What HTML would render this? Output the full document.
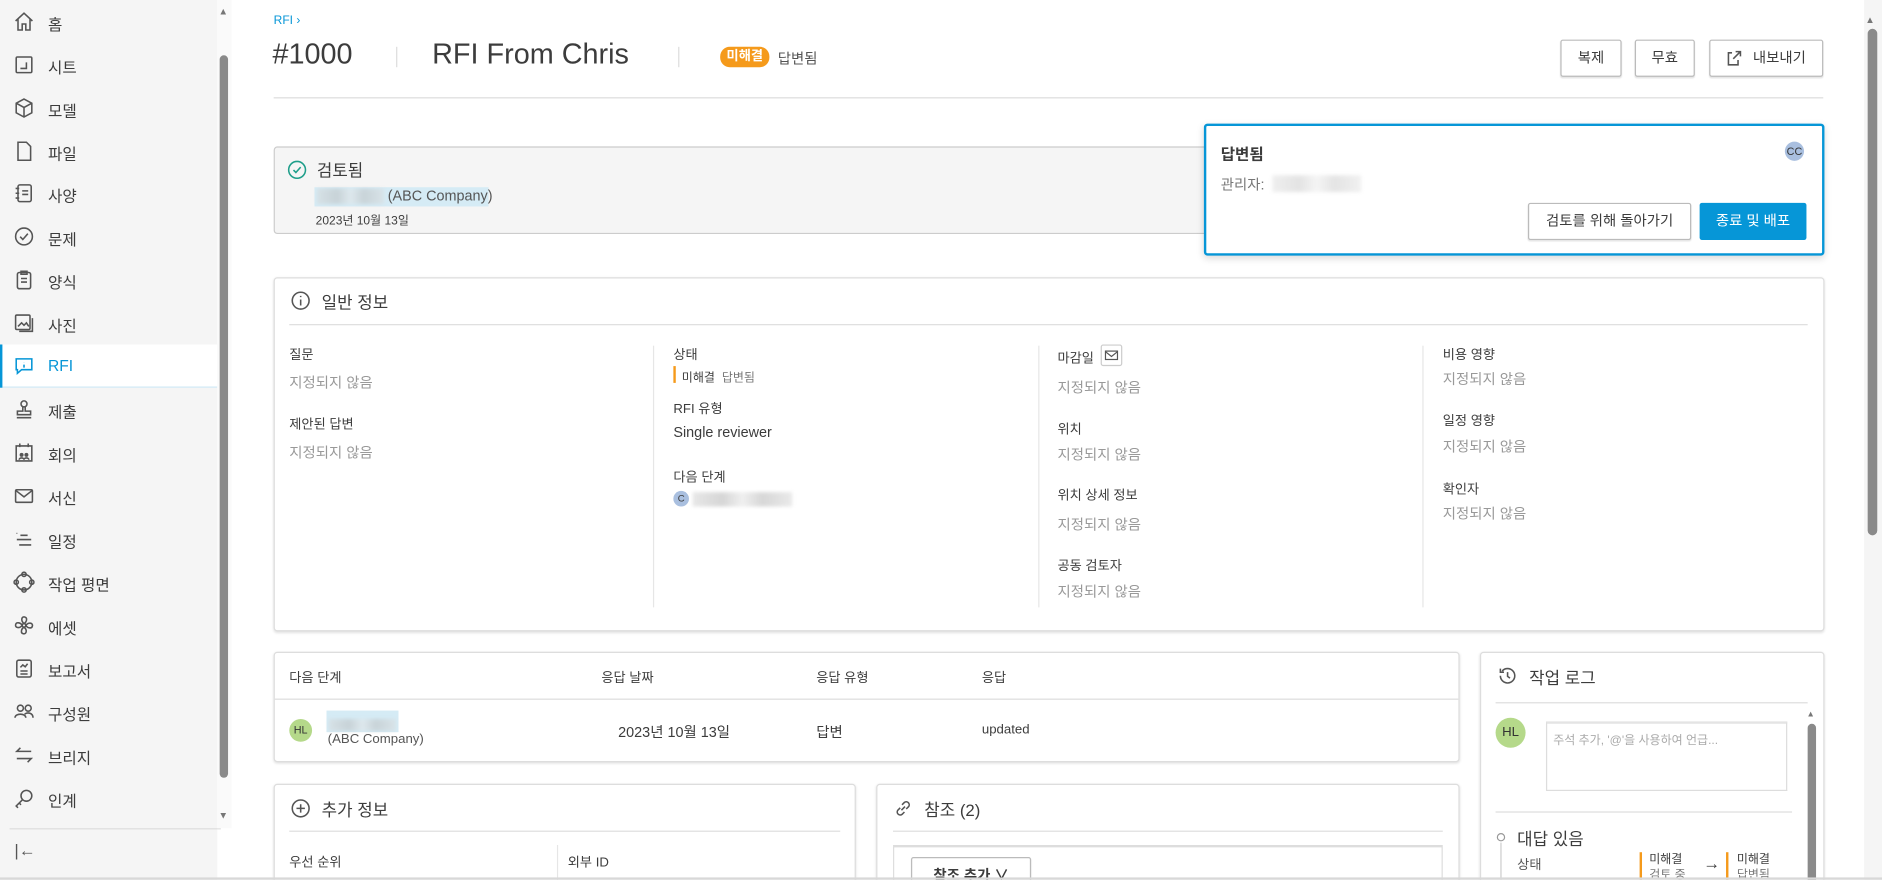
<!DOCTYPE html>
<html><head><meta charset="utf-8">
<style>
*{box-sizing:border-box;margin:0;padding:0}
html,body{width:1882px;height:880px;overflow:hidden;background:#fff}
body{font-family:"Liberation Sans","Noto Sans CJK KR",sans-serif;color:#3c3c3c}
#w{position:absolute;left:0;top:0;width:1568px;height:733px;transform:scale(1.2003);transform-origin:0 0;background:#fff;overflow:hidden}
.a{position:absolute;white-space:nowrap}
#side{position:absolute;left:0;top:0;width:181px;height:733px;background:#f5f5f5}
.nav{position:absolute;left:0;width:181px;height:36px;font-size:13px;color:#3c3c3c}
.nav svg{position:absolute;left:11px;top:9px;width:18px;height:18px;fill:none;stroke:#555;stroke-width:1.3}
.nav span{position:absolute;left:40px;top:10px}
.nav.on{background:#fff;color:#0696d7;border-bottom:1px solid #cfe8f5}
.nav.on:before{content:"";position:absolute;left:0;top:0;width:2px;height:36px;background:#0696d7}
.nav.on svg{stroke:#0696d7}
.card{position:absolute;background:#fff;border:1px solid #ddd;border-radius:3px;box-shadow:0 1px 2px rgba(0,0,0,.12)}
.lbl{font-size:11px;color:#3c3c3c}
.na{font-size:12px;color:#999}
.hr{position:absolute;height:1px;background:#ddd}
.vr{position:absolute;width:1px;background:#e6e6e6}
.btn{position:absolute;border:1px solid #bbb;border-radius:2px;background:#fff;font-size:12px;color:#3c3c3c;text-align:center;box-shadow:0 1px 1px rgba(0,0,0,.1)}
.blur{position:absolute;background:linear-gradient(90deg,#d8d8d8,#bbb 30%,#e6e6e6 50%,#bdbdbd 70%,#dcdcdc);filter:blur(1.5px)}
.ic{fill:none;stroke:#555;stroke-width:1.3}
</style></head><body><div id="w">

<div id="side">
<div class="nav" style="top:0"><svg viewBox="0 0 18 18"><path d="M2 8.5L9 2l7 6.5M4 7v9h3.5v-5h3v5H14V7"/></svg><span>홈</span></div>
<div class="nav" style="top:36px"><svg viewBox="0 0 18 18"><rect x="2.5" y="2.5" width="13" height="13" rx="1"/><path d="M6 12h5V7"/></svg><span>시트</span></div>
<div class="nav" style="top:72px"><svg viewBox="0 0 18 18"><path d="M9 1.5l6.5 3.5v8L9 16.5 2.5 13V5zM2.5 5L9 8.5l6.5-3.5M9 8.5v8"/></svg><span>모델</span></div>
<div class="nav" style="top:108px"><svg viewBox="0 0 18 18"><path d="M4 1.5h7l3.5 3.5v11.5H4z"/></svg><span>파일</span></div>
<div class="nav" style="top:143px"><svg viewBox="0 0 18 18"><rect x="4" y="2" width="11" height="14" rx="1.5"/><path d="M2 5h3M2 9h3M2 13h3M7.5 7h5M7.5 10h5"/></svg><span>사양</span></div>
<div class="nav" style="top:179px"><svg viewBox="0 0 18 18"><circle cx="9" cy="9" r="7"/><path d="M5.8 9.2l2.2 2.3 4.2-4.8"/></svg><span>문제</span></div>
<div class="nav" style="top:215px"><svg viewBox="0 0 18 18"><rect x="3.5" y="3" width="11" height="13.5" rx="1.5"/><path d="M6.5 2h5v2.5h-5zM6.5 8h5M6.5 11h5"/></svg><span>양식</span></div>
<div class="nav" style="top:251px"><svg viewBox="0 0 18 18"><rect x="2" y="2.5" width="12" height="12" rx="1"/><path d="M16 5v11H5M4 12l3-3 2 2 2-2 2 3"/></svg><span>사진</span></div>
<div class="nav on" style="top:287px"><svg viewBox="0 0 18 18"><path d="M2.5 3h13v9H7l-3.5 3v-3h-1z"/><path d="M9 6v.1M9 7.8v2.5"/></svg><span>RFI</span></div>
<div class="nav" style="top:323px"><svg viewBox="0 0 18 18"><circle cx="9" cy="4.5" r="2.5"/><path d="M8 7v3.5H3.5v3h11v-3H10V7M3 16h12"/></svg><span>제출</span></div>
<div class="nav" style="top:359px"><svg viewBox="0 0 18 18"><path d="M2.5 3.5h13V16h-13zM5.5 1.5v3M12.5 1.5v3"/><circle cx="7" cy="11" r="1" fill="#555"/><circle cx="11" cy="11" r="1" fill="#555"/><path d="M5 15c0-2 4-2 4 0M9 15c0-2 4-2 4 0"/></svg><span>회의</span></div>
<div class="nav" style="top:395px"><svg viewBox="0 0 18 18"><rect x="2" y="4" width="14" height="10.5" rx="1"/><path d="M2 4.5l7 5.5 7-5.5"/></svg><span>서신</span></div>
<div class="nav" style="top:431px"><svg viewBox="0 0 18 18"><path d="M3 4v.5M6 6h6M3 9.5h12M5 14h10"/></svg><span>일정</span></div>
<div class="nav" style="top:467px"><svg viewBox="0 0 18 18"><circle cx="9" cy="9" r="6.5"/><circle cx="9" cy="2.5" r="1.8"/><circle cx="15.5" cy="9" r="1.8"/><circle cx="9" cy="15.5" r="1.8"/><circle cx="2.5" cy="9" r="1.8"/></svg><span>작업 평면</span></div>
<div class="nav" style="top:503px"><svg viewBox="0 0 18 18"><circle cx="9" cy="9" r="1.5"/><path d="M9 7.5C6 5 7 1.5 9.5 2s2 4-.5 5.5M10.5 9c2.5-3 6-2 5.5.5s-4 2-5.5-.5M9 10.5c3 2.5 2 6-.5 5.5s-2-4 .5-5.5M7.5 9c-2.5 3-6 2-5.5-.5s4-2 5.5.5"/></svg><span>에셋</span></div>
<div class="nav" style="top:539px"><svg viewBox="0 0 18 18"><rect x="3" y="2" width="12" height="14" rx="1.5"/><path d="M6 8l2-2 2 1.5 2-2.5M6 11h6M6 13.5h6"/></svg><span>보고서</span></div>
<div class="nav" style="top:575px"><svg viewBox="0 0 18 18"><circle cx="6" cy="6" r="2.5"/><circle cx="12.5" cy="6" r="2.5"/><path d="M1.5 14c0-4 9-4 9 0M9.5 11c2.5-2 7-1 7 3"/></svg><span>구성원</span></div>
<div class="nav" style="top:611px"><svg viewBox="0 0 18 18"><path d="M15 6H3l3-3M3 12h12l-3 3"/></svg><span>브리지</span></div>
<div class="nav" style="top:647px"><svg viewBox="0 0 18 18"><circle cx="11" cy="7" r="4.5"/><path d="M8 10l-5.5 5.5 1.5 1.5M5 13l1.5 1.5"/></svg><span>인계</span></div>
<div class="hr" style="left:8px;top:690px;width:176px;background:#ddd"></div>
<div class="a" style="left:12px;top:700px;font-size:14px;color:#555">|←</div>
</div>
<div class="a" style="left:181px;top:0;width:12px;height:690px;background:#fafafa"></div>
<div class="a" style="left:182px;top:5px;font-size:8px;color:#777">▲</div>
<div class="a" style="left:183px;top:46px;width:7px;height:602px;background:#8a8a8a;border-radius:4px"></div>
<div class="a" style="left:182px;top:675px;font-size:8px;color:#777">▼</div>

<div class="a" style="left:1553px;top:0;width:15px;height:733px;background:#f5f5f5"></div>
<div class="a" style="left:1554px;top:12px;font-size:8px;color:#777">▲</div>
<div class="a" style="left:1556px;top:24px;width:8px;height:422px;background:#8a8a8a;border-radius:4px"></div>

<div class="a" style="left:228px;top:12px;font-size:10px;color:#0696d7">RFI ›</div>
<div class="a" style="left:227px;top:32px;font-size:24px;color:#3c3c3c">#1000</div>
<div class="a" style="left:330px;top:39px;width:1px;height:17px;background:#ddd"></div>
<div class="a" style="left:360px;top:32px;font-size:24px;color:#3c3c3c">RFI From Chris</div>
<div class="a" style="left:565px;top:39px;width:1px;height:17px;background:#ddd"></div>
<div class="a" style="left:600px;top:39px;width:41px;height:17px;background:#f59a1b;border-radius:8px;color:#fff;font-size:11px;font-weight:bold;text-align:center;line-height:17px">미해결</div>
<div class="a" style="left:648px;top:40px;font-size:12px;color:#555">답변됨</div>
<div class="btn" style="left:1300px;top:33px;width:51px;height:31px;line-height:29px">복제</div>
<div class="btn" style="left:1362px;top:33px;width:50px;height:31px;line-height:29px">무효</div>
<div class="btn" style="left:1424px;top:33px;width:95px;height:31px;line-height:29px;padding-left:22px"><svg class="a" style="left:11px;top:7px" width="16" height="16" viewBox="0 0 16 16"><path class="ic" d="M7 3H4v10h8v-4M8 8l6-6M10 2h4v4"/></svg>내보내기</div>
<div class="hr" style="left:228px;top:81px;width:1291px"></div>

<div class="a" style="left:228px;top:122px;width:790px;height:73px;background:#f5f5f5;border:1px solid #ccc;border-radius:3px"></div>
<svg class="a" style="left:239px;top:133px" width="17" height="17" viewBox="0 0 17 17"><circle cx="8.5" cy="8.5" r="7" fill="none" stroke="#1e9e8a" stroke-width="1.3"/><path d="M5.5 8.7l2 2 4-4.5" fill="none" stroke="#1e9e8a" stroke-width="1.3"/></svg>
<div class="a" style="left:264px;top:132px;font-size:14px;color:#3c3c3c">검토됨</div>
<div class="a" style="left:262px;top:156px;width:145px;height:16px;background:#d5ebf5"></div>
<div class="blur" style="left:264px;top:157px;width:56px;height:13px;opacity:.5"></div>
<div class="a" style="left:323px;top:156px;font-size:12px;color:#555">(ABC Company)</div>
<div class="a" style="left:263px;top:175px;font-size:10px;color:#3c3c3c">2023년 10월 13일</div>

<div class="a" style="left:1003px;top:103px;width:517px;height:110px;background:#fff;border:2px solid #0696d7;border-radius:3px;box-shadow:0 2px 6px rgba(0,0,0,.15)"></div>
<div class="a" style="left:1017px;top:118px;font-size:13px;font-weight:bold;color:#3c3c3c">답변됨</div>
<div class="a" style="left:1487px;top:118px;width:16px;height:16px;border-radius:8px;background:#a9bfdf;font-size:9px;text-align:center;line-height:16px;color:#333">CC</div>
<div class="a" style="left:1017px;top:145px;font-size:12px;color:#777">관리자:</div>
<div class="blur" style="left:1060px;top:146px;width:74px;height:14px;opacity:.4"></div>
<div class="btn" style="left:1273px;top:169px;width:136px;height:31px;line-height:29px">검토를 위해 돌아가기</div>
<div class="a" style="left:1416px;top:169px;width:89px;height:31px;background:#0696d7;color:#fff;font-size:12px;text-align:center;line-height:31px;border-radius:2px">종료 및 배포</div>

<div class="card" style="left:228px;top:231px;width:1292px;height:295px"></div>
<svg class="a" style="left:242px;top:242px" width="17" height="17" viewBox="0 0 17 17"><circle cx="8.5" cy="8.5" r="7" class="ic"/><path class="ic" d="M8.5 7.5v5M8.5 4.5v1"/></svg>
<div class="a" style="left:268px;top:242px;font-size:14px;color:#3c3c3c">일반 정보</div>
<div class="hr" style="left:241px;top:270px;width:1265px"></div>
<div class="vr" style="left:544px;top:288px;height:218px"></div>
<div class="vr" style="left:865px;top:288px;height:218px"></div>
<div class="vr" style="left:1185px;top:288px;height:218px"></div>

<div class="a lbl" style="left:241px;top:287px">질문</div>
<div class="a na" style="left:241px;top:310px">지정되지 않음</div>
<div class="a lbl" style="left:241px;top:345px">제안된 답변</div>
<div class="a na" style="left:241px;top:368px">지정되지 않음</div>

<div class="a lbl" style="left:561px;top:287px">상태</div>
<div class="a" style="left:561px;top:305px;width:2px;height:14px;background:#f59a1b"></div>
<div class="a" style="left:568px;top:306px;font-size:10px;color:#3c3c3c">미해결 <span style="color:#777;margin-left:3px">답변됨</span></div>
<div class="a lbl" style="left:561px;top:332px">RFI 유형</div>
<div class="a" style="left:561px;top:353px;font-size:12px;color:#3c3c3c">Single reviewer</div>
<div class="a lbl" style="left:561px;top:389px">다음 단계</div>
<div class="a" style="left:561px;top:409px;width:13px;height:13px;border-radius:7px;background:#a9bfdf;font-size:8px;text-align:center;line-height:13px">C</div>
<div class="blur" style="left:577px;top:410px;width:83px;height:12px;opacity:.6"></div>

<div class="a lbl" style="left:881px;top:290px">마감일</div>
<div class="a" style="left:917px;top:287px;width:18px;height:18px;border:1px solid #ccc;border-radius:2px"><svg width="16" height="16" viewBox="0 0 16 16"><rect x="3" y="4.5" width="10" height="7" fill="none" stroke="#555"/><path d="M3 5l5 4 5-4" fill="none" stroke="#555"/></svg></div>
<div class="a na" style="left:881px;top:314px">지정되지 않음</div>
<div class="a lbl" style="left:881px;top:349px">위치</div>
<div class="a na" style="left:881px;top:370px">지정되지 않음</div>
<div class="a lbl" style="left:881px;top:404px">위치 상세 정보</div>
<div class="a na" style="left:881px;top:428px">지정되지 않음</div>
<div class="a lbl" style="left:881px;top:463px">공동 검토자</div>
<div class="a na" style="left:881px;top:484px">지정되지 않음</div>

<div class="a lbl" style="left:1202px;top:287px">비용 영향</div>
<div class="a na" style="left:1202px;top:307px">지정되지 않음</div>
<div class="a lbl" style="left:1202px;top:342px">일정 영향</div>
<div class="a na" style="left:1202px;top:363px">지정되지 않음</div>
<div class="a lbl" style="left:1202px;top:399px">확인자</div>
<div class="a na" style="left:1202px;top:419px">지정되지 않음</div>

<div class="card" style="left:228px;top:543px;width:988px;height:92px"></div>
<div class="a lbl" style="left:241px;top:556px">다음 단계</div>
<div class="a lbl" style="left:501px;top:556px">응답 날짜</div>
<div class="a lbl" style="left:680px;top:556px">응답 유형</div>
<div class="a lbl" style="left:818px;top:556px">응답</div>
<div class="hr" style="left:229px;top:582px;width:986px"></div>
<div class="a" style="left:241px;top:599px;width:19px;height:19px;border-radius:10px;background:#b5d98a;font-size:9px;text-align:center;line-height:19px;color:#333">HL</div>
<div class="a" style="left:272px;top:592px;width:60px;height:18px;background:#d5ebf5"></div>
<div class="blur" style="left:274px;top:599px;width:56px;height:10px;opacity:.5"></div>
<div class="a" style="left:273px;top:610px;font-size:11px;color:#555">(ABC Company)</div>
<div class="a" style="left:515px;top:601px;font-size:12px;color:#3c3c3c">2023년 10월 13일</div>
<div class="a" style="left:680px;top:601px;font-size:12px;color:#3c3c3c">답변</div>
<div class="a" style="left:818px;top:602px;font-size:11px;color:#3c3c3c">updated</div>

<div class="card" style="left:228px;top:653px;width:485px;height:100px"></div>
<svg class="a" style="left:242px;top:665px" width="17" height="17" viewBox="0 0 17 17"><circle cx="8.5" cy="8.5" r="7" class="ic"/><path class="ic" d="M8.5 5v7M5 8.5h7"/></svg>
<div class="a" style="left:268px;top:665px;font-size:14px">추가 정보</div>
<div class="hr" style="left:241px;top:692px;width:459px"></div>
<div class="a lbl" style="left:241px;top:710px">우선 순위</div>
<div class="vr" style="left:464px;top:704px;height:40px"></div>
<div class="a lbl" style="left:473px;top:710px">외부 ID</div>

<div class="card" style="left:730px;top:653px;width:486px;height:100px"></div>
<svg class="a" style="left:744px;top:665px" width="17" height="17" viewBox="0 0 17 17"><path class="ic" d="M7 10l3-3M6 8L4 10a2.5 2.5 0 003.5 3.5L9.5 11.5M11 9l2-2A2.5 2.5 0 009.5 3.5L7.5 5.5"/></svg>
<div class="a" style="left:770px;top:665px;font-size:14px">참조 (2)</div>
<div class="hr" style="left:744px;top:692px;width:458px"></div>
<div class="a" style="left:744px;top:704px;width:458px;height:40px;border:1px solid #ddd;border-top:2px solid #ddd"></div>
<div class="btn" style="left:759px;top:714px;width:100px;height:30px;line-height:28px;font-weight:bold">참조 추가 ∨</div>

<div class="card" style="left:1233px;top:543px;width:287px;height:200px"></div>
<svg class="a" style="left:1247px;top:554px" width="18" height="18" viewBox="0 0 18 18"><path class="ic" d="M3 9a6 6 0 106-6 6 6 0 00-4.5 2M3 3v3h3M9 6v3.5l2 1.5"/></svg>
<div class="a" style="left:1274px;top:555px;font-size:14px">작업 로그</div>
<div class="hr" style="left:1246px;top:585px;width:260px"></div>
<div class="a" style="left:1505px;top:592px;font-size:7px;color:#777">▲</div>
<div class="a" style="left:1506px;top:603px;width:7px;height:140px;background:#8a8a8a;border-radius:4px"></div>
<div class="a" style="left:1246px;top:598px;width:25px;height:25px;border-radius:13px;background:#b5d98a;font-size:11px;text-align:center;line-height:25px;color:#333">HL</div>
<div class="a" style="left:1288px;top:601px;width:201px;height:58px;border:1px solid #ddd;border-top:2px solid #e4e4e4;padding:5px;font-size:10px;color:#aaa">주석 추가, '@'을 사용하여 언급...</div>
<div class="hr" style="left:1246px;top:676px;width:247px"></div>
<div class="a" style="left:1247px;top:694px;width:7px;height:7px;border:1px solid #999;border-radius:4px"></div>
<div class="a" style="left:1250px;top:702px;width:1px;height:31px;background:#ccc"></div>
<div class="a" style="left:1264px;top:689px;font-size:14px">대답 있음</div>
<div class="a" style="left:1264px;top:712px;font-size:11px;color:#555">상태</div>
<div class="a" style="left:1366px;top:710px;width:2px;height:23px;background:#f59a1b"></div>
<div class="a" style="left:1374px;top:710px;font-size:10px;line-height:13px">미해결<br><span style="color:#777">검토 중</span></div>
<div class="a" style="left:1419px;top:711px;font-size:14px">→</div>
<div class="a" style="left:1438px;top:710px;width:2px;height:23px;background:#f59a1b"></div>
<div class="a" style="left:1447px;top:710px;font-size:10px;line-height:13px">미해결<br><span style="color:#777">답변됨</span></div>
<div class="a" style="left:0;top:731px;width:1568px;height:2px;background:#d8d8d8"></div>
</div></body></html>
